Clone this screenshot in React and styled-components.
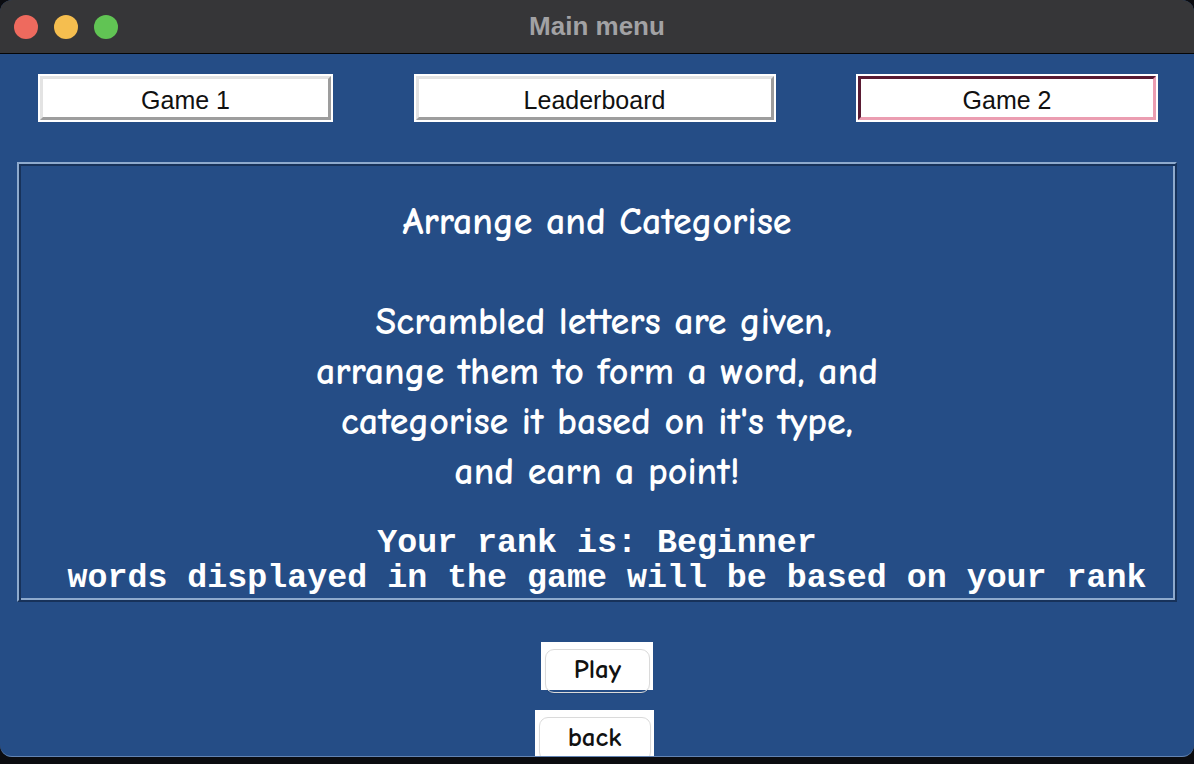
import React from 'react';
import styled, { createGlobalStyle } from 'styled-components';

const GlobalStyle = createGlobalStyle`
  html, body {
    margin: 0;
    padding: 0;
    background: #0b0c10;
  }
  body {
    width: 1194px;
    height: 764px;
    overflow: hidden;
  }
`;

const Window = styled.div`
  width: 1194px;
  height: 757px;
  box-sizing: border-box;
  border-radius: 12px;
  overflow: hidden;
  background: #254d86;
  border-bottom: 1px solid #6384b3;
  display: flex;
  flex-direction: column;
`;

const TitleBar = styled.div`
  height: 53px;
  flex-shrink: 0;
  background: #363638;
  border-bottom: 1px solid #050505;
  display: grid;
  grid-template-columns: 1fr auto 1fr;
  align-items: center;
  padding: 0 14px;
`;

const Lights = styled.div`
  display: flex;
  gap: 16px;
`;

const Light = styled.span`
  width: 24px;
  height: 24px;
  border-radius: 50%;
  background: ${(p) => p.color};
`;

const WindowTitle = styled.div`
  font-family: "Liberation Sans", Arial, sans-serif;
  font-weight: 700;
  font-size: 26px;
  color: #a2a2a4;
`;

const Content = styled.div`
  display: flex;
  flex-direction: column;
  align-items: center;
`;

const TabRow = styled.div`
  align-self: stretch;
  display: flex;
  justify-content: space-between;
  padding: 20px 36px 0 38px;
`;

const TabFrame = styled.div`
  width: ${(p) => p.w}px;
  height: 48px;
  box-sizing: border-box;
  padding: 2px;
  background: #ffffff;
`;

const TabButton = styled.div`
  height: 100%;
  box-sizing: border-box;
  border: 3px solid;
  border-color: ${(p) =>
    p.active
      ? '#5a1b33 #eb9db1 #eb9db1 #5a1b33'
      : '#e3e3e3 #9d9d9d #9d9d9d #e3e3e3'};
  background: #ffffff;
  display: flex;
  align-items: center;
  justify-content: center;
  font-family: "Liberation Sans", Arial, sans-serif;
  font-size: 25px;
  color: #111111;
  padding-top: 5px;
`;

const Panel = styled.div`
  margin-top: 40px;
  width: 1160px;
  height: 440px;
  box-sizing: border-box;
  border: 2px solid;
  border-color: #8eaacd #17325a #17325a #8eaacd;
  box-shadow: inset 2px 2px 0 #17325a, inset -2px -2px 0 #8eaacd;
  display: flex;
  flex-direction: column;
  align-items: center;
  padding-top: 33px;
  color: #ffffff;
`;

const Description = styled.div`
  font-family: "Comic Sans MS", "Comic Neue", "Open Sans", sans-serif;
  font-weight: 700;
  font-size: 38px;
  line-height: 50px;
  text-align: center;
  white-space: pre;
`;

const RankText = styled.div`
  margin-top: 29px;
  font-family: "Liberation Mono", "Courier New", monospace;
  font-weight: 700;
  font-size: 33.3px;
  line-height: 35px;
  text-align: center;
  white-space: pre;
`;

const ActionFrame = styled.div`
  margin-top: ${(p) => p.mt}px;
  margin-right: ${(p) => p.shift || 0}px;
  width: ${(p) => p.w}px;
  height: 48px;
  box-sizing: border-box;
  background: #ffffff;
  padding: 7px 3px 0 4px;
  display: flex;
`;

const ActionButton = styled.div`
  flex: 1;
  height: 44px;
  box-sizing: border-box;
  border: 1px solid #dadada;
  border-radius: 9px;
  box-shadow: 0 1px 1px rgba(0, 0, 0, 0.08);
  display: flex;
  align-items: center;
  justify-content: center;
  padding-bottom: 4px;
  font-family: "Comic Sans MS", "Comic Neue", "Open Sans", sans-serif;
  font-weight: 700;
  font-size: 27px;
  color: #111111;
`;

const description = `Arrange and Categorise

 Scrambled letters are given,
arrange them to form a word, and
categorise it based on it's type,
and earn a point!`;

const rank = `Your rank is: Beginner
 words displayed in the game will be based on your rank`;

export default function App() {
  return (
    <>
      <GlobalStyle />
      <Window>
        <TitleBar>
          <Lights>
            <Light color="#ee6a5e" />
            <Light color="#f5be4f" />
            <Light color="#61c454" />
          </Lights>
          <WindowTitle>Main menu</WindowTitle>
          <span />
        </TitleBar>
        <Content>
          <TabRow>
            <TabFrame w={295}>
              <TabButton>Game 1</TabButton>
            </TabFrame>
            <TabFrame w={362}>
              <TabButton>Leaderboard</TabButton>
            </TabFrame>
            <TabFrame w={302}>
              <TabButton active>Game 2</TabButton>
            </TabFrame>
          </TabRow>
          <Panel>
            <Description>{description}</Description>
            <RankText>{rank}</RankText>
          </Panel>
          <ActionFrame mt={40} w={112}>
            <ActionButton>Play</ActionButton>
          </ActionFrame>
          <ActionFrame mt={20} w={119} shift={6}>
            <ActionButton>back</ActionButton>
          </ActionFrame>
        </Content>
      </Window>
    </>
  );
}
